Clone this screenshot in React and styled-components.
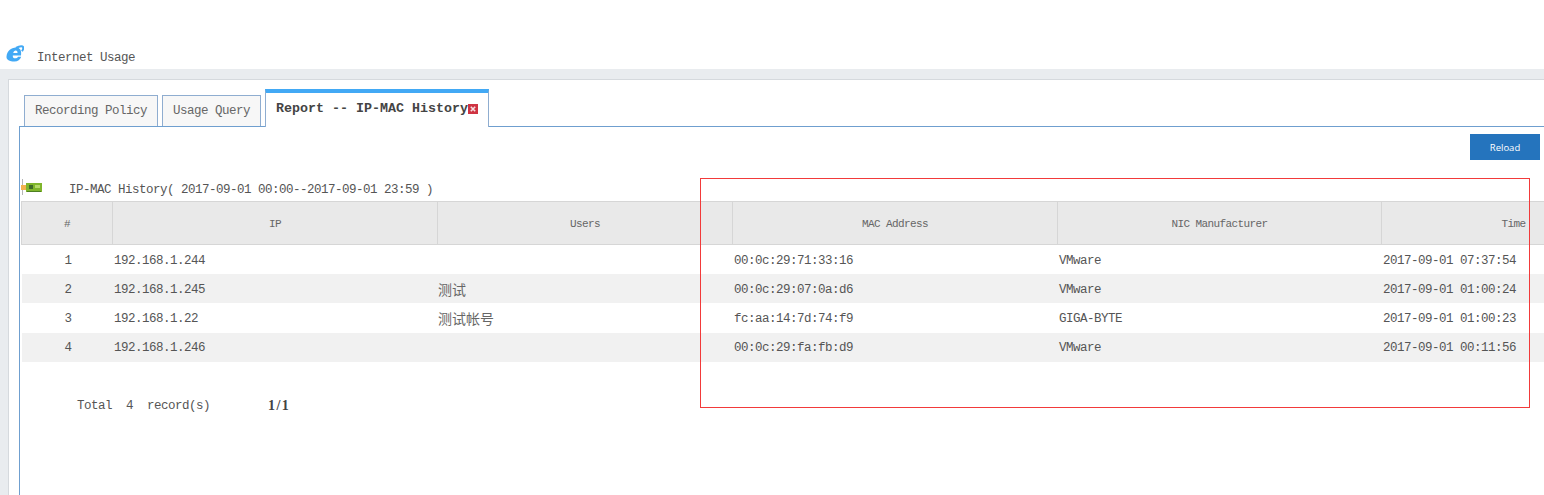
import React from "react";
import styled, { createGlobalStyle } from "styled-components";

const Global = createGlobalStyle`
  html, body { margin: 0; padding: 0; background: #fff; }
  * { box-sizing: border-box; }
`;

const MONO = `"Liberation Mono", "Noto Sans CJK SC", monospace`;
const COLS = "91px 325px 295px 325px 324px 263px";

const Page = styled.div`
  position: relative;
  width: 1544px;
  height: 495px;
  overflow: hidden;
  display: flex;
  flex-direction: column;
  font-family: ${MONO};
  font-size: 12.5px;
  letter-spacing: -0.5px;
  color: #555;
`;
const TopBar = styled.header`
  height: 69px;
  flex: none;
  display: flex;
  align-items: flex-start;
  padding: 45px 0 0 6px;
`;
const TopTitle = styled.span`
  margin-left: 13px;
  margin-top: 5px;
  line-height: 16px;
  color: #555;
`;
const Band = styled.div`
  flex: 1;
  min-height: 0;
  background: #e9ecef;
  padding: 10px 0 0 8px;
  display: flex;
`;
const Content = styled.main`
  flex: 1;
  min-width: 0;
  background: #fff;
  border-top: 1px solid #d5d9dd;
  border-left: 1px solid #d5d9dd;
  padding-left: 10px;
  display: flex;
  flex-direction: column;
`;
const TabStrip = styled.nav`
  height: 46px;
  flex: none;
  display: flex;
  align-items: flex-end;
  gap: 4px;
  padding-left: 5px;
  position: relative;
  z-index: 1;
`;
const Tab = styled.div`
  height: 31px;
  width: ${(p) => p.$width}px;
  padding: 0 10px;
  display: flex;
  align-items: center;
  border: 1px solid #8fadd0;
  border-bottom: 0;
  background: #f7f7f7;
  color: #666;
  white-space: nowrap;
`;
const ActiveTab = styled.div`
  height: 38px;
  margin-bottom: -1px;
  padding: 0 10px;
  display: flex;
  align-items: center;
  border: 1px solid #8fadd0;
  border-top: 4px solid #42a9f5;
  border-bottom: 0;
  background: #fff;
  color: #444;
  font-size: 13.33px;
  letter-spacing: 0;
  font-weight: 700;
  white-space: nowrap;
  & > span { margin-top: -3px; }
`;
const CloseBox = styled.svg`
  width: 10px;
  height: 10px;
  flex: none;
  margin-top: -3px;
`;
const Panel = styled.section`
  flex: 1;
  min-height: 0;
  border-top: 1px solid #6f9fcf;
  border-left: 1px solid #6f9fcf;
  display: flex;
  flex-direction: column;
`;
const Toolbar = styled.div`
  display: flex;
  justify-content: flex-end;
  padding: 7px 4px 0 0;
`;
const ReloadButton = styled.button`
  width: 70px;
  height: 26px;
  border: 0;
  padding: 0;
  background: #2574bd;
  color: #fff;
  font-family: "Open Sans", "Liberation Sans", sans-serif;
  font-size: 9.5px;
  letter-spacing: 0;
`;
const TitleRow = styled.div`
  height: 41px;
  display: flex;
  align-items: flex-end;
  padding-left: 1px;
`;
const CardIcon = styled.svg`
  width: 21px;
  height: 16px;
  flex: none;
  margin-bottom: 6px;
`;
const TableTitle = styled.h2`
  margin: 0 0 -1px 27px;
  font: inherit;
  line-height: 24px;
  white-space: nowrap;
`;
const Table = styled.div`
  margin-left: 1px;
  width: 1650px;
`;
const HeadRow = styled.div`
  display: grid;
  grid-template-columns: ${COLS};
  height: 44px;
  background: #e9e9e9;
  border: 1px solid #d6d6d6;
  border-width: 1px 0 1px 1px;
`;
const HeadCell = styled.div`
  display: flex;
  align-items: center;
  justify-content: center;
  padding-top: 1px;
  font-size: 11px;
  letter-spacing: -0.6px;
  color: #666;
  border-right: 1px solid #d6d6d6;
  &:last-child { border-right: 0; }
`;
const Row = styled.div`
  display: grid;
  grid-template-columns: ${COLS};
  margin-left: 1px;
  height: 29.2px;
  align-items: center;
  background: ${(p) => (p.$odd ? "#f1f1f1" : "#fff")};
`;
const Cell = styled.div`
  padding-left: ${(p) => (p.$flush ? 0 : 1)}px;
  padding-top: 2px;
  text-align: ${(p) => (p.$center ? "center" : "left")};
  white-space: nowrap;
`;
const CjkCell = styled(Cell)`
  font-family: "Noto Sans CJK SC", sans-serif;
  font-size: 14px;
  letter-spacing: 0;
  font-weight: 400;
  padding-top: 0;
  color: #666;
`;
const Footer = styled.div`
  margin-top: 34px;
  padding-left: 57px;
  display: flex;
  line-height: 20px;
  white-space: pre;
`;
const Pager = styled.b`
  margin-left: 58px;
  font-family: "Liberation Serif", serif;
  font-size: 14px;
  letter-spacing: 1.4px;
  color: #444;
`;
const Annotation = styled.div`
  position: absolute;
  left: 700px;
  top: 178px;
  width: 830px;
  height: 230px;
  border: 1px solid #f23a3a;
  pointer-events: none;
  z-index: 2;
`;

const IeIcon = styled.svg`
  width: 18px;
  height: 18px;
  flex: none;
`;

const rows = [
  ["1", "192.168.1.244", "", "00:0c:29:71:33:16", "VMware", "2017-09-01 07:37:54"],
  ["2", "192.168.1.245", "测试", "00:0c:29:07:0a:d6", "VMware", "2017-09-01 01:00:24"],
  ["3", "192.168.1.22", "测试帐号", "fc:aa:14:7d:74:f9", "GIGA-BYTE", "2017-09-01 01:00:23"],
  ["4", "192.168.1.246", "", "00:0c:29:fa:fb:d9", "VMware", "2017-09-01 00:11:56"],
];
const heads = ["#", "IP", "Users", "MAC Address", "NIC Manufacturer", "Time"];

export default function App() {
  return (
    <>
      <Global />
      <Page>
        <TopBar>
          <IeIcon viewBox="0 0 18 18">
            <path
              fill="#42a9f5"
              fillRule="evenodd"
              d="M.5 11.500C1 6 5 2.500 10 2.500c4 0 5.800 2.800 5 8H6.800c-.2 2 .8 2.800 2.400 2.800 1.300 0 2.200-.5 2.800-1.500h3.200c-1 3-3.400 4.700-6.700 4.700C3.500 16.500.2 15 .5 11.500ZM7.200 8h4.300c.1-1.500-.5-2.400-1.800-2.400C8.500 5.600 7.600 6.500 7.200 8Z"
            />
            <path
              fill="none"
              stroke="#42a9f5"
              strokeWidth="2"
              d="M10 3C14 .8 17.300 .8 17.300 3c0 1-.5 2-1.300 3.200"
            />
          </IeIcon>
          <TopTitle>Internet Usage</TopTitle>
        </TopBar>
        <Band>
          <Content>
            <TabStrip>
              <Tab $width={134}>Recording Policy</Tab>
              <Tab $width={99}>Usage Query</Tab>
              <ActiveTab>
                <span>Report -- IP-MAC History</span>
                <CloseBox viewBox="0 0 10 10">
                  <rect width="10" height="10" fill="#cf3342" />
                  <path d="M2.800 2.800l4.400 4.400M7.200 2.800l-4.400 4.400" stroke="#f4dfe0" strokeWidth="1.600" />
                </CloseBox>
              </ActiveTab>
            </TabStrip>
            <Panel>
              <Toolbar>
                <ReloadButton>Reload</ReloadButton>
              </Toolbar>
              <TitleRow>
                <CardIcon viewBox="0 0 21 16">
                  <rect x="1" y="0" width="1" height="16" fill="#b5b5b5" />
                  <path d="M0 6h5v5H0z" fill="#f2b24f" />
                  <rect x="5" y="4" width="16" height="9" fill="#7fb52c" />
                  <rect x="8" y="6" width="4" height="4" fill="#3e6b2a" />
                  <rect x="14" y="6" width="5" height="3" fill="#b4d96a" />
                  <rect x="6" y="12" width="14" height="1" fill="#4d7f22" />
                </CardIcon>
                <TableTitle>IP-MAC History( 2017-09-01 00:00--2017-09-01 23:59 )</TableTitle>
              </TitleRow>
              <Table>
                <HeadRow>
                  {heads.map((h) => (
                    <HeadCell key={h}>{h}</HeadCell>
                  ))}
                </HeadRow>
                {rows.map((r, i) => (
                  <Row key={r[0]} $odd={i % 2 === 1}>
                    <Cell $center>{r[0]}</Cell>
                    <Cell>{r[1]}</Cell>
                    <CjkCell $flush>{r[2]}</CjkCell>
                    <Cell>{r[3]}</Cell>
                    <Cell>{r[4]}</Cell>
                    <Cell>{r[5]}</Cell>
                  </Row>
                ))}
              </Table>
              <Footer>
                <span>Total  4  record(s)</span>
                <Pager>1/1</Pager>
              </Footer>
            </Panel>
          </Content>
        </Band>
        <Annotation />
      </Page>
    </>
  );
}
